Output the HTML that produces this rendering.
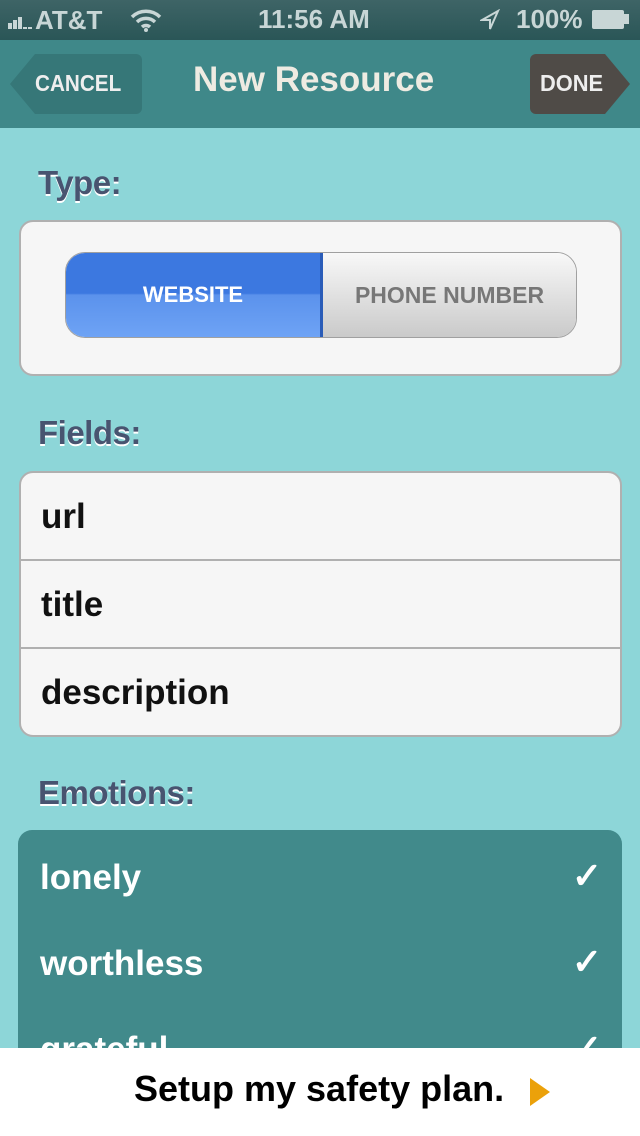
<!DOCTYPE html>
<html><head><meta charset="utf-8"><style>
*{margin:0;padding:0;box-sizing:border-box}
body{width:640px;height:1136px;overflow:hidden;background:#8dd6d8;font-family:"Liberation Sans",sans-serif;position:relative}
.sb{position:absolute;top:0;left:0;width:640px;height:40px;background:linear-gradient(#3e6466,#2a5657);color:#c8d6d6;font-weight:bold;font-size:26px}
.nav{position:absolute;top:40px;left:0;width:640px;height:88px;background:#3f8889}
.lbl{position:absolute;left:38px;font-size:33px;font-weight:bold;color:#485470;text-shadow:0 2px 0 #fff;letter-spacing:-0.5px}
.box{position:absolute;left:19px;width:603px;background:#f6f6f6;border:2px solid #b0b0b0;border-radius:14px}
.row{height:88px;line-height:88px;padding-left:20px;font-size:35px;font-weight:bold;border-bottom:2px solid #b0b0b0;color:#111}
.row:last-child{border-bottom:none}
.emo{position:absolute;left:18px;top:830px;width:604px;height:260px;background:#418a8b;border-radius:14px}
.er{height:86px;line-height:96px;padding-left:22px;font-size:35px;font-weight:bold;color:#fff;position:relative}
.er span{position:absolute;right:20px;top:-2px;font-size:36px}
</style></head><body>
<div class="sb">
<div style="position:absolute;left:8px;top:5px">
<span style="display:inline-block;width:4px;height:6px;background:#c8d6d6;margin-right:1px"></span><span style="display:inline-block;width:4px;height:9px;background:#c8d6d6;margin-right:1px"></span><span style="display:inline-block;width:4px;height:12px;background:#c8d6d6;margin-right:1px"></span><span style="display:inline-block;width:4px;height:2px;background:#c8d6d6;margin-right:1px"></span><span style="display:inline-block;width:4px;height:2px;background:#c8d6d6;margin-right:3px"></span>AT&amp;T</div>
<svg style="position:absolute;left:130px;top:8px" width="32" height="24" viewBox="0 0 32 24"><path d="M2 9a20 20 0 0 1 28 0M7 14a13 13 0 0 1 18 0M12 19a6 6 0 0 1 8 0" stroke="#c8d6d6" stroke-width="3.5" fill="none"/><circle cx="16" cy="22" r="2" fill="#c8d6d6"/></svg>
<div style="position:absolute;left:258px;top:4px">11:56 AM</div>
<svg style="position:absolute;left:480px;top:9px" width="20" height="22"><path d="M18 2L2 11h8v9z" stroke="#c8d6d6" stroke-width="2" fill="none"/></svg>
<div style="position:absolute;left:516px;top:4px">100%</div>
<div style="position:absolute;left:592px;top:10px;width:32px;height:19px;background:#c8d6d6;border-radius:2px"></div>
<div style="position:absolute;left:624px;top:14px;width:5px;height:10px;background:#c8d6d6"></div>
</div>
<div class="nav">
<svg style="position:absolute;left:10px;top:14px" width="132" height="60"><path d="M25 0H126a6 6 0 0 1 6 6V54a6 6 0 0 1-6 6H25L0 30z" fill="#367778"/></svg>
<div style="position:absolute;left:35px;top:30px;color:#eee;font-weight:bold;font-size:23px;transform:scaleX(0.9);transform-origin:left">CANCEL</div>
<div style="position:absolute;left:193px;top:20px;color:#eeebe2;font-weight:bold;font-size:35px">New Resource</div>
<svg style="position:absolute;left:530px;top:14px" width="100" height="60"><path d="M6 0H75L100 30L75 60H6a6 6 0 0 1-6-6V6a6 6 0 0 1 6-6z" fill="#4f4b47"/></svg>
<div style="position:absolute;left:540px;top:30px;color:#eee;font-weight:bold;font-size:23px;transform:scaleX(0.95);transform-origin:left">DONE</div>
</div>
<div class="lbl" style="top:164px">Type:</div>
<div class="box" style="top:220px;height:156px">
<div style="position:absolute;left:44px;top:30px;width:512px;height:86px;border-radius:20px;overflow:hidden;border:1px solid #a0a0a0;display:flex">
<div style="width:257px;background:linear-gradient(#3c78e0 0%,#3c78e0 48%,#5b92ec 50%,#6ea3f5 100%);color:#fff;font-weight:bold;font-size:22px;text-align:center;line-height:84px;border-right:3px solid #2a5cb8">WEBSITE</div>
<div style="flex:1;background:linear-gradient(#f8f8f8,#cacaca);color:#777;font-weight:bold;font-size:23px;text-align:center;line-height:84px">PHONE NUMBER</div>
</div></div>
<div class="lbl" style="top:414px">Fields:</div>
<div class="box" style="top:471px;height:266px">
<div class="row">url</div><div class="row">title</div><div class="row">description</div>
</div>
<div class="lbl" style="top:774px">Emotions:</div>
<div class="emo">
<div class="er">lonely<span>✓</span></div>
<div class="er">worthless<span>✓</span></div>
<div class="er">grateful<span>✓</span></div>
</div>
<div style="position:absolute;left:0;top:1048px;width:640px;height:88px;background:#fff">
<div style="position:absolute;left:134px;top:20px;font-size:36px;font-weight:bold;color:#000">Setup my safety plan.</div>
<svg style="position:absolute;left:530px;top:30px" width="20" height="28"><path d="M0 0L20 14L0 28z" fill="#eba10a"/></svg>
</div>
</body></html>
